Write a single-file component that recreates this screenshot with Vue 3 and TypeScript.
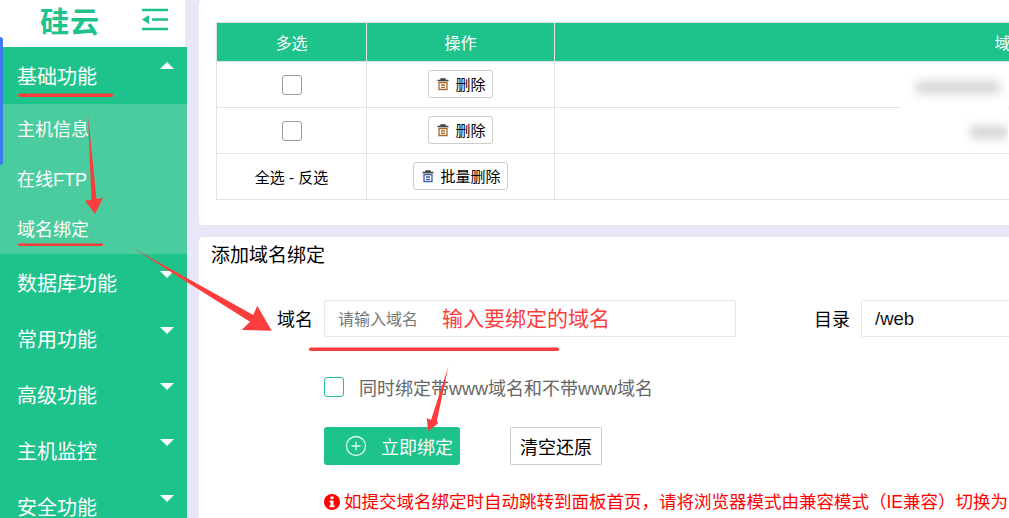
<script setup lang="ts">
const menus = ['数据库功能', '常用功能', '高级功能', '主机监控', '安全功能']
const subs = ['主机信息', '在线FTP', '域名绑定']
const rows = [{ id: 1 }, { id: 2 }]
</script>

<template>
  <div class="page">
    <aside class="side">
      <div class="logo">
        <span class="logo-text">硅云</span>
        <svg class="fold" width="28" height="24" viewBox="0 0 28 24">
          <path d="M1 2h26M11 11.500h16M1 21h26" stroke="#1ec28b" stroke-width="2.400" fill="none" />
          <path d="M1 11.500 8 7v9z" fill="#1ec28b" />
        </svg>
      </div>
      <div class="menu-head first">
        <span>基础功能</span>
        <i class="caret up"></i>
      </div>
      <div class="sub">
        <div v-for="s in subs" :key="s" class="sub-item">{{ s }}</div>
      </div>
      <div v-for="m in menus" :key="m" class="menu-head">
        <span>{{ m }}</span>
        <i class="caret"></i>
      </div>
    </aside>

    <main class="main">
      <section class="card list-card">
        <table class="tb">
          <colgroup>
            <col style="width: 150px" />
            <col style="width: 188px" />
            <col style="width: 912px" />
          </colgroup>
          <thead>
            <tr>
              <th>多选</th>
              <th>操作</th>
              <th>域名</th>
            </tr>
          </thead>
          <tbody>
            <tr v-for="r in rows" :key="r.id">
              <td><span class="check"></span></td>
              <td>
                <button class="del">
                  <svg class="trash" width="14" height="14" viewBox="0 0 14 14">
                    <path d="M1.500 3.500h11M5 3.500V2h4v1.500" stroke="#444" stroke-width="1.400" fill="none" />
                    <path d="M3 5.500h8v7H3zM5 8h4M5 10.300h4" stroke="#a9682c" stroke-width="1.300" fill="none" />
                  </svg>
                  删除
                </button>
              </td>
              <td></td>
            </tr>
            <tr>
              <td>全选 - 反选</td>
              <td>
                <button class="del">
                  <svg class="trash" width="14" height="14" viewBox="0 0 14 14">
                    <path d="M1.500 3.500h11M5 3.500V2h4v1.500" stroke="#444" stroke-width="1.400" fill="none" />
                    <path d="M3 5.500h8v7H3zM5 8h4M5 10.300h4" stroke="#3a62a8" stroke-width="1.300" fill="none" />
                  </svg>
                  批量删除
                </button>
              </td>
              <td></td>
            </tr>
          </tbody>
        </table>
        <div class="mask mask-a"><div class="smudge"></div></div>
        <div class="mask mask-b"><div class="smudge"></div></div>
      </section>

      <section class="card form-card">
        <h3 class="title">添加域名绑定</h3>
        <div class="form-row">
          <label class="lb">域名</label>
          <div class="field">
            <input class="ipt" placeholder="请输入域名" />
            <span class="hint">输入要绑定的域名</span>
          </div>
          <label class="lb lb-dir">目录</label>
          <input class="ipt ipt-dir" value="/web" />
        </div>
        <div class="www">
          <span class="check green"></span>
          <span>同时绑定带www域名和不带www域名</span>
        </div>
        <div class="actions">
          <button class="btn-main">
            <svg width="22" height="22" viewBox="0 0 22 22">
              <circle cx="11" cy="11" r="9.500" stroke="#fff" stroke-width="1.300" fill="none" opacity="0.85" />
              <path d="M11 6.500v9M6.500 11h9" stroke="#fff" stroke-width="1.300" opacity="0.85" />
            </svg>
            <span>立即绑定</span>
          </button>
          <button class="btn-reset">清空还原</button>
        </div>
        <div class="warn">
          <svg width="16" height="16" viewBox="0 0 16 16">
            <circle cx="8" cy="8" r="8" fill="#f00" />
            <rect x="6.500" y="2.500" width="3" height="2.500" fill="#fff" />
            <path d="M5.500 6.500h4v5h1.200v1.800H5.500v-1.800h1v-3.200h-1z" fill="#fff" />
          </svg>
          <span>如提交域名绑定时自动跳转到面板首页，请将浏览器模式由兼容模式（IE兼容）切换为</span>
        </div>
      </section>
    </main>

    <i class="edge-tab"></i>

    <!-- 红色标注 -->
    <svg class="marks" width="1009" height="518" viewBox="0 0 1009 518">
      <g fill="#fc3d3d">
        <rect x="18" y="93.500" width="95" height="3.500" rx="1.700" />
        <rect x="18" y="243.500" width="85" height="2.400" rx="1" />
        <rect x="309" y="347.500" width="250" height="3.500" rx="1.700" />
        <polygon points="88,115 96.500,199 103,198 95,214 85,200.500 91.500,200" />
        <polygon points="131.700,247.300 253.300,315 257.300,305.700 271.700,330.700 241.700,330 250,321.700" />
        <polygon points="448.300,366.700 437,420.500 438,423.500 428.300,431 426.700,418 431,420" />
      </g>
    </svg>
  </div>
</template>

<style scoped>
.page {
  position: relative;
  display: flex;
  width: 1009px;
  height: 518px;
  overflow: hidden;
  background: #e9e7f7;
  font-family: "Liberation Sans", "Noto Sans CJK SC", sans-serif;
  color: #000;
}
.side {
  flex: none;
  width: 187px;
  background: #1ec28b;
  color: #fff;
}
.logo {
  display: flex;
  align-items: center;
  width: 185px;
  height: 47px;
  padding: 0 16px 8px 40px;
  box-sizing: border-box;
  background: #fff;
  box-shadow: 2px 0 0 #e9e7f7;
}
.logo-text {
  flex: 1;
  color: #1ec28b;
  font-size: 29px;
  font-weight: 700;
  letter-spacing: 1px;
}
.menu-head {
  display: flex;
  align-items: center;
  justify-content: space-between;
  height: 56px;
  padding: 0 13px 0 17px;
  box-sizing: border-box;
  font-size: 20px;
}
.menu-head.first {
  height: 57px;
}
.caret {
  display: block;
  width: 0;
  height: 0;
  margin-top: -15px;
  border-left: 7px solid transparent;
  border-right: 7px solid transparent;
  border-top: 7px solid #fff;
}
.caret.up {
  margin-top: -20px;
  border-top: 0;
  border-bottom: 7px solid #fff;
}
.sub {
  background: #4bcc9e;
}
.sub-item {
  height: 50px;
  padding-left: 17px;
  line-height: 52px;
  font-size: 18px;
}
.main {
  flex: none;
  width: 1200px;
  padding-left: 12px;
}
.card {
  position: relative;
  background: #fff;
  border-radius: 4px;
}
.list-card {
  height: 225px;
  padding: 22px 0 0 17px;
  box-sizing: border-box;
  margin-bottom: 12px;
}
.tb {
  width: 1250px;
  table-layout: fixed;
  border-collapse: collapse;
  font-size: 15px;
  text-align: center;
}
.tb th,
.tb td {
  border: 1px solid #e2e2e2;
  padding: 0;
}
.tb th {
  height: 38px;
  background: #1ec28b;
  color: #fff;
  font-size: 16px;
  font-weight: 400;
}
.tb td {
  height: 45px;
}
.check {
  display: inline-block;
  width: 18px;
  height: 18px;
  border: 1px solid #9a9aa8;
  border-radius: 3px;
  vertical-align: middle;
}
.check.green {
  border-color: #1ec28b;
}
.del {
  display: inline-flex;
  align-items: center;
  height: 28px;
  margin-bottom: 2px;
  padding: 0 6px 0 7px;
  gap: 5px;
  background: #fff;
  border: 1px solid #ccc;
  border-radius: 3px;
  font: inherit;
  vertical-align: middle;
}
.mask {
  position: absolute;
  background: #fff;
  overflow: hidden;
}
.mask-a {
  left: 701px;
  top: 70px;
  width: 108px;
  height: 38px;
}
.mask-b {
  left: 755px;
  top: 112px;
  width: 54px;
  height: 34px;
}
.smudge {
  height: 13px;
  margin: 11px 8px 0 16px;
  background: #d6d6d6;
  filter: blur(5px);
}
.mask-b .smudge {
  margin: 14px 0 0 16px;
}
.form-card {
  height: 300px;
  padding: 0 0 0 12px;
}
.title {
  margin: 0;
  padding-top: 7px;
  font-size: 19px;
  line-height: 24px;
  font-weight: 400;
}
.form-row {
  display: flex;
  align-items: center;
  margin-top: 32px;
  padding-left: 66px;
}
.lb {
  width: 36px;
  margin: 0 11px 2px 0;
  font-size: 18px;
  white-space: nowrap;
}
.lb-dir {
  margin: 0 11px 2px 78px;
}
.field {
  position: relative;
}
.ipt {
  display: block;
  width: 412px;
  height: 37px;
  padding: 1px 13px 0;
  box-sizing: border-box;
  border: 1px solid #e6e6e6;
  border-radius: 2px;
  outline: none;
  background: #fff;
  font: inherit;
  font-size: 18.500px;
  color: #111;
}
.ipt::placeholder {
  color: #777;
  font-size: 16px;
}
.ipt-dir {
  width: 300px;
  flex: none;
}
.hint {
  position: absolute;
  left: 118px;
  top: 4px;
  color: #fc3d3d;
  font-size: 21px;
  line-height: 30px;
  white-space: nowrap;
}
.www {
  display: flex;
  align-items: center;
  gap: 15px;
  margin: 39px 0 0 113px;
  height: 22px;
  font-size: 18px;
  color: #666;
}
.actions {
  display: flex;
  gap: 50px;
  margin: 29px 0 0 113px;
}
.btn-main {
  display: flex;
  align-items: center;
  gap: 14px;
  width: 136px;
  height: 38px;
  padding: 0 0 0 21px;
  box-sizing: border-box;
  border: 0;
  border-radius: 3px;
  background: #1ec28b;
  color: #fff;
  font: inherit;
  font-size: 18px;
}
.btn-reset {
  width: 92px;
  height: 38px;
  border: 1px solid #ccc;
  border-radius: 2px;
  background: #fff;
  color: #000;
  font: inherit;
  font-size: 18px;
}
.warn {
  display: flex;
  align-items: center;
  gap: 4px;
  margin: 25px 0 0 113px;
  color: #f00;
  font-size: 17.500px;
  line-height: 24px;
  white-space: nowrap;
}
.warn svg {
  flex: none;
}
.edge-tab {
  position: absolute;
  left: 0;
  top: 37px;
  width: 3px;
  height: 128px;
  background: #3f7bf0;
  border-radius: 0 4px 4px 0;
}
.marks {
  position: absolute;
  left: 0;
  top: 0;
  pointer-events: none;
}
</style>

<style>
html,
body {
  overflow: hidden;
}
</style>
